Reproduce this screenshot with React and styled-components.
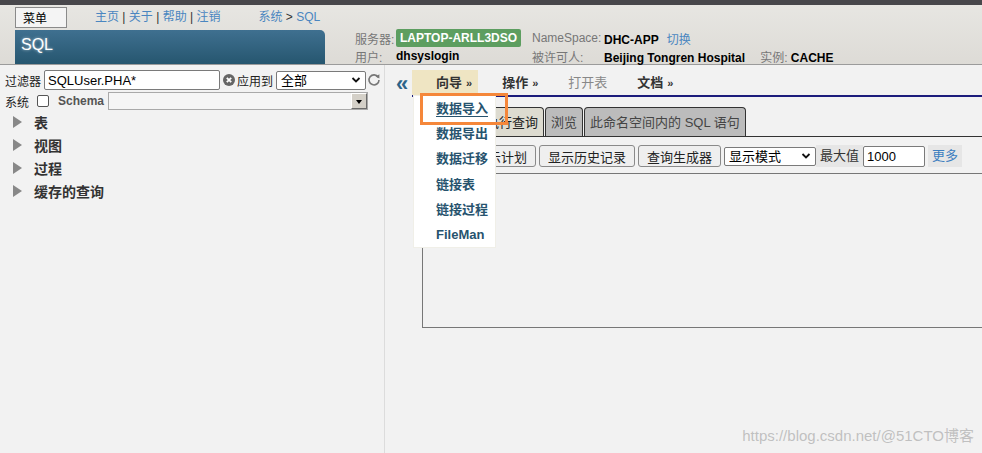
import styled, { createGlobalStyle } from "styled-components";

const GlobalStyle = createGlobalStyle`
  html, body {
    margin: 0;
    padding: 0;
    background: #f2f2f2;
    overflow: hidden;
  }
  body {
    font-family: "Liberation Sans", "Noto Sans CJK SC", sans-serif;
    color: #222;
  }
  * { box-sizing: border-box; }
`;

const Page = styled.div`
  position: relative;
  width: 982px;
  height: 453px;
  display: flex;
  flex-direction: column;
`;

const TopStrip = styled.div`
  height: 5px;
  background: #48474b;
`;

const Header = styled.header`
  height: 60px;
  display: flex;
  background: linear-gradient(#e7e6e2, #dddbd6);
  border-bottom: 1px solid #9b9b9b;
`;

const HeaderLeft = styled.div`
  margin-left: 15px;
  width: 310px;
  display: flex;
  flex-direction: column;
`;

const NavRow = styled.div`
  height: 25px;
  padding-top: 2px;
  display: flex;
  align-items: flex-start;
  font-size: 12px;
`;

const MenuButton = styled.button`
  width: 52px;
  height: 21px;
  padding: 0 0 0 7px;
  text-align: left;
  background: #f4f4f4;
  border: 1px solid #8a8a8a;
  font: inherit;
  font-size: 12px;
  color: #000;
`;

const Links = styled.div`
  margin-left: 28px;
  line-height: 21px;
  color: #333;
  a { color: #4a86c0; text-decoration: none; }
`;

const Crumb = styled.div`
  margin-left: 38px;
  line-height: 21px;
  color: #333;
  a { color: #4a86c0; text-decoration: none; }
`;

const TitleBox = styled.div`
  flex: 1;
  background: linear-gradient(#3f7090, #26566f);
  border-radius: 0 5px 0 0;
  color: #fff;
  font-size: 16px;
  padding: 6px 0 0 6px;
  text-shadow: 0 0 3px rgba(255, 255, 255, 0.6);
`;

const InfoGrid = styled.div`
  margin-left: 30px;
  margin-top: 24px;
  display: grid;
  grid-template-columns: 41px 136px 72px auto;
  grid-auto-rows: 18px;
  align-items: center;
  font-size: 12px;
`;

const Label = styled.span`
  color: #777;
  font-weight: normal;
`;

const Value = styled.span`
  color: #000;
  font-weight: bold;
  white-space: nowrap;
`;

const ServerBadge = styled.span`
  justify-self: start;
  background: #5d9e60;
  color: #fff;
  font-weight: bold;
  padding: 2px 4px;
  border-radius: 2px;
`;

const InfoLink = styled.a`
  margin-left: 8px;
  color: #4a86c0;
  font-weight: normal;
`;

const InfoExtra = styled.span`
  margin-left: 15px;
`;

const Main = styled.div`
  flex: 1;
  display: flex;
`;

const LeftPane = styled.aside`
  width: 385px;
  border-right: 1px solid #dcdcdc;
  padding: 5px 0 0 5px;
  font-size: 12px;
`;

const Row = styled.div`
  display: flex;
  align-items: center;
  height: ${(p) => p.$h || 20}px;
  margin-bottom: ${(p) => p.$mb || 0}px;
`;

const TextInput = styled.input`
  width: ${(p) => p.$w}px;
  height: ${(p) => p.$ht || 20}px;
  margin-left: ${(p) => p.$ml || 0}px;
  border: 1px solid #7a7a7a;
  border-radius: 2px;
  background: #fff;
  font: inherit;
  font-size: 13px;
  padding: 0 3px;
  color: #000;
`;

const SelectWrap = styled.div`
  position: relative;
  margin-left: ${(p) => p.$ml || 0}px;
  svg {
    position: absolute;
    right: 5px;
    top: 50%;
    transform: translateY(-50%);
    pointer-events: none;
  }
`;

const Select = styled.select`
  appearance: none;
  width: ${(p) => p.$w}px;
  height: ${(p) => p.$ht}px;
  border: 1px solid #7a7a7a;
  border-radius: 2px;
  background: #fff;
  font: inherit;
  font-size: 13px;
  padding: 0 4px;
  color: #000;
`;

const IconSlot = styled.span`
  display: inline-flex;
  margin: 0 ${(p) => p.$mr || 2}px 0 ${(p) => p.$ml || 3}px;
`;

const Checkbox = styled.span`
  width: 12px;
  height: 12px;
  margin: 0 9px 0 8px;
  border: 1px solid #555;
  border-radius: 2px;
  background: #fff;
`;

const SchemaLabel = styled.span`
  font-weight: bold;
  color: #555;
  margin-right: 4px;
`;

const Combo = styled.div`
  width: 260px;
  height: 18px;
  border: 1px solid #a9a9a9;
  background: #f5f5f5;
  display: flex;
  justify-content: flex-end;
`;

const ComboButton = styled.span`
  width: 16px;
  height: 16px;
  background: #d4d0c8;
  border: 1px solid;
  border-color: #fff #6a6a6a #6a6a6a #fff;
  display: flex;
  align-items: center;
  justify-content: center;
  &::after {
    content: "";
    border: 3px solid transparent;
    border-top: 4px solid #000;
    margin-top: 4px;
  }
`;

const Tree = styled.ul`
  list-style: none;
  margin: 0;
  padding: 0;
`;

const TreeItem = styled.li`
  height: 23px;
  display: flex;
  align-items: center;
  padding-left: 8px;
  font-size: 14px;
  font-weight: bold;
  color: #333;
  &::before {
    content: "";
    border-top: 6px solid transparent;
    border-bottom: 6px solid transparent;
    border-left: 9px solid #888;
    margin-right: 12px;
  }
`;

const RightPane = styled.section`
  position: relative;
  flex: 1;
  padding: 5px 0 0 0;
  font-size: 13px;
`;

const TopBar = styled.div`
  display: flex;
  align-items: stretch;
`;

const Collapse = styled.span`
  width: 27px;
  padding-left: 11px;
  display: flex;
  align-items: center;
  color: #2d6488;
  font-size: 22px;
  font-weight: bold;
  letter-spacing: -3px;
`;

const MenuBar = styled.nav`
  flex: 1;
  display: flex;
  border-bottom: 2px solid #1c1c7c;
`;

const MenuItem = styled.span`
  height: 25px;
  line-height: 25px;
  padding: 0 6px 0 24px;
  font-weight: ${(p) => (p.$disabled ? "normal" : "bold")};
  color: ${(p) => (p.$disabled ? "#888" : "#333")};
  background: ${(p) => (p.$active ? "#efe5c3" : "transparent")};
  white-space: nowrap;
  small { font-size: 11px; margin-left: 4px; }
`;

const Content = styled.div`
  padding-left: 37px;
`;

const Tabs = styled.div`
  margin-top: 10px;
  display: flex;
  gap: 1px;
  padding-left: 58px;
  border-bottom: 1px solid #333;
`;

const Tab = styled.span`
  height: 29px;
  line-height: 29px;
  padding: 0 5px;
  border: 1px solid #333;
  border-bottom: none;
  border-radius: 4px 4px 0 0;
  background: ${(p) => (p.$active ? "#dddbd0" : "#bcbcbc")};
  color: ${(p) => (p.$active ? "#222" : "#444")};
  white-space: nowrap;
`;

const Toolbar = styled.div`
  margin: 8px 0 0 -3px;
  display: flex;
  align-items: center;
  gap: 3px;
  height: 22px;
`;

const Button = styled.button`
  height: 22px;
  padding: 0 8px;
  border: 1px solid #8a8a8a;
  border-radius: 3px;
  background: #efefef;
  font: inherit;
  font-size: 13px;
  color: #222;
  white-space: nowrap;
`;

const Chip = styled.span`
  height: 22px;
  line-height: 22px;
  padding: 0 4px;
  background: #e6e6e6;
  color: ${(p) => (p.$link ? "#3d7fc0" : "#333")};
  white-space: nowrap;
`;

const Editor = styled.div`
  margin-top: 6px;
  height: 155px;
  border: 1px solid #777;
  border-right: none;
`;

const Dropdown = styled.ul`
  position: absolute;
  left: 28px;
  top: 30px;
  width: 83px;
  margin: 0;
  padding: 0;
  list-style: none;
  background: #fff;
  border: 1px solid #f0efe8;
`;

const DropItem = styled.li`
  height: 25.2px;
  line-height: 25px;
  padding-left: 22px;
  font-weight: bold;
  color: #27536e;
  text-decoration: ${(p) => (p.$hover ? "underline" : "none")};
  text-underline-offset: 3px;
`;

const Highlight = styled.div`
  position: absolute;
  left: 35px;
  top: 28px;
  width: 88px;
  height: 32px;
  border: 3px solid #f5873a;
`;

const Watermark = styled.div`
  position: absolute;
  right: 8px;
  bottom: 8px;
  font-size: 15px;
  color: rgba(170, 170, 170, 0.7);
  pointer-events: none;
`;

const Chevron = () => (
  <svg width="10" height="10" viewBox="0 0 10 10">
    <path d="M1.5 3 L5 6.5 L8.5 3" fill="none" stroke="#111" strokeWidth="1.8" />
  </svg>
);

const ClearIcon = () => (
  <svg width="12" height="12" viewBox="0 0 12 12">
    <circle cx="6" cy="6" r="6" fill="#666" />
    <path d="M3.8 3.8 L8.2 8.2 M8.2 3.8 L3.8 8.2" stroke="#fff" strokeWidth="1.8" />
  </svg>
);

const RefreshIcon = () => (
  <svg width="14" height="14" viewBox="0 0 14 14">
    <path d="M11.2 4.2 A5 5 0 1 0 12 7" fill="none" stroke="#777" strokeWidth="1.6" />
    <path d="M8.5 3.6 L12.4 1.2 L12.4 5.4 Z" fill="#777" />
  </svg>
);

const wizardItems = ["数据导入", "数据导出", "数据迁移", "链接表", "链接过程", "FileMan"];
const treeItems = ["表", "视图", "过程", "缓存的查询"];

export default function App() {
  return (
    <Page>
      <GlobalStyle />
      <TopStrip />
      <Header>
        <HeaderLeft>
          <NavRow>
            <MenuButton>菜单</MenuButton>
            <Links>
              <a>主页</a> | <a>关于</a> | <a>帮助</a> | <a>注销</a>
            </Links>
            <Crumb>
              <a>系统</a> &gt; <a>SQL</a>
            </Crumb>
          </NavRow>
          <TitleBox>SQL</TitleBox>
        </HeaderLeft>
        <InfoGrid>
          <Label>服务器:</Label>
          <ServerBadge>LAPTOP-ARLL3DSO</ServerBadge>
          <Label>NameSpace:</Label>
          <Value>
            DHC-APP<InfoLink>切换</InfoLink>
          </Value>
          <Label>用户:</Label>
          <Value>dhsyslogin</Value>
          <Label>被许可人:</Label>
          <Value>
            Beijing Tongren Hospital
            <InfoExtra>
              <Label>实例:</Label> CACHE
            </InfoExtra>
          </Value>
        </InfoGrid>
      </Header>

      <Main>
        <LeftPane>
          <Row $mb={2}>
            <span>过滤器</span>
            <TextInput $w={176} $ml={3} defaultValue="SQLUser.PHA*" />
            <IconSlot>
              <ClearIcon />
            </IconSlot>
            <span>应用到</span>
            <SelectWrap $ml={3}>
              <Select $w={90} $ht={19} defaultValue="all">
                <option value="all">全部</option>
              </Select>
              <Chevron />
            </SelectWrap>
            <IconSlot $ml={1}>
              <RefreshIcon />
            </IconSlot>
          </Row>
          <Row $h={18}>
            <span>系统</span>
            <Checkbox />
            <SchemaLabel>Schema</SchemaLabel>
            <Combo>
              <ComboButton />
            </Combo>
          </Row>
          <Tree>
            {treeItems.map((t) => (
              <TreeItem key={t}>{t}</TreeItem>
            ))}
          </Tree>
        </LeftPane>

        <RightPane>
          <TopBar>
            <Collapse>«</Collapse>
            <MenuBar>
              <MenuItem $active>
                向导<small>»</small>
              </MenuItem>
              <MenuItem>
                操作<small>»</small>
              </MenuItem>
              <MenuItem $disabled>打开表</MenuItem>
              <MenuItem>
                文档<small>»</small>
              </MenuItem>
            </MenuBar>
          </TopBar>
          <Content>
            <Tabs>
              <Tab $active>执行查询</Tab>
              <Tab>浏览</Tab>
              <Tab>此命名空间内的 SQL 语句</Tab>
            </Tabs>
            <Toolbar>
              <Button>执行</Button>
              <Button>显示计划</Button>
              <Button>显示历史记录</Button>
              <Button>查询生成器</Button>
              <SelectWrap>
                <Select $w={92} $ht={19} defaultValue="display">
                  <option value="display">显示模式</option>
                </Select>
                <Chevron />
              </SelectWrap>
              <Chip style={{ marginLeft: -3 }}>最大值</Chip>
              <TextInput $w={62} $ht={21} $ml={-3} defaultValue="1000" />
              <Chip $link>更多</Chip>
            </Toolbar>
            <Editor />
          </Content>
          <Dropdown>
            {wizardItems.map((t, i) => (
              <DropItem key={t} $hover={i === 0}>
                {t}
              </DropItem>
            ))}
          </Dropdown>
          <Highlight />
        </RightPane>
      </Main>
      <Watermark>https://blog.csdn.net/@51CTO博客</Watermark>
    </Page>
  );
}
